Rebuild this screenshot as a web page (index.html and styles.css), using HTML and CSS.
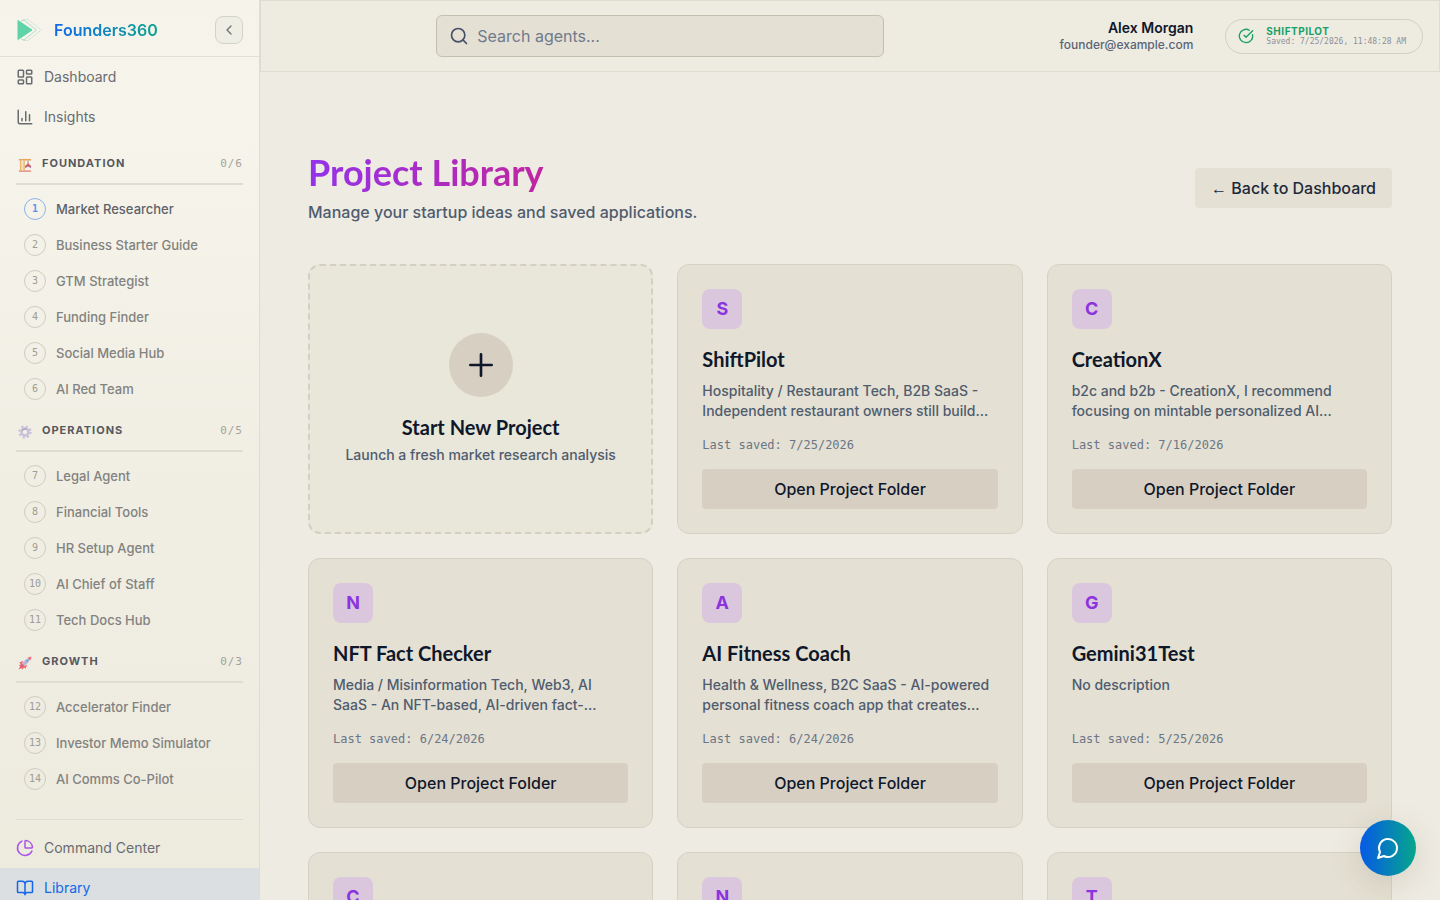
FILE: index.html
```html
<!DOCTYPE html>
<html lang="en">
<head>
<meta charset="utf-8">
<meta name="viewport" content="width=device-width, initial-scale=1">
<title>Founders360 – Project Library</title>
<link rel="stylesheet" href="styles.css">
</head>
<body>
<div class="shell">
  <aside class="sidebar">
    <div class="brand">
      <svg class="logo" viewBox="0 0 28 24" aria-hidden="true">
        <path d="M7 1.500H12L25.500 12 12 22.500H7" fill="none" stroke="#b4dcc8" stroke-width=".8" stroke-dasharray="2 1"/>
        <path d="M5 3 8 2 20.500 12 8 22 5 21" fill="none" stroke="#a4d6bf" stroke-width=".8"/>
        <path d="M2 2.500V21.500L16 12Z" fill="#5fd3a8" stroke="#5fd3a8" stroke-linejoin="round"/>
      </svg>
      <span class="brand-name">Founders360</span>
      <button class="collapse" type="button" aria-label="Collapse sidebar">
        <svg class="icon-sm" viewBox="0 0 24 24"><path d="m15 18-6-6 6-6"/></svg>
      </button>
    </div>
    <nav class="nav" aria-label="Main">
      <a class="nav-link" href="#"><svg class="icon" viewBox="0 0 24 24"><rect x="3" y="3" width="7" height="9" rx="1"/><rect x="14" y="3" width="7" height="5" rx="1"/><rect x="14" y="12" width="7" height="9" rx="1"/><rect x="3" y="16" width="7" height="5" rx="1"/></svg>Dashboard</a>
      <a class="nav-link" href="#"><svg class="icon" viewBox="0 0 24 24"><path d="M3 3v16a2 2 0 0 0 2 2h16M18 17V9M13 17V5M8 17v-3"/></svg>Insights</a>

      <section class="group group-first">
        <h2 class="group-head">
          <svg class="emoji" viewBox="0 0 16 16" aria-hidden="true"><path d="M1 15h14" stroke="#e58a76" stroke-width="1.600"/><path d="M3 3v11M7 3v11" fill="none" stroke="#e9b668" stroke-width="1.600"/><path d="M3 4l4 2.500-4 2.500 4 2.500-4 2.500" fill="none" stroke="#eec98a"/><path d="M1 2h14" stroke="#e8a35c" stroke-width="1.800"/><path d="M11.500 3v3" stroke="#8a8090"/><path d="M8.500 9 11.500 5.500l3 3.500z" fill="#d5606a"/><path d="M8 9.500h7M9 9v2.500M14 9v2.500" stroke="#a85b7b" stroke-width="1.200"/></svg>
          <span class="group-name">Foundation</span><span class="count">0/6</span>
        </h2>
        <ul class="steps">
          <li><a class="step step-current" href="#"><span class="num">1</span>Market Researcher</a></li>
          <li><a class="step" href="#"><span class="num">2</span>Business Starter Guide</a></li>
          <li><a class="step" href="#"><span class="num">3</span>GTM Strategist</a></li>
          <li><a class="step" href="#"><span class="num">4</span>Funding Finder</a></li>
          <li><a class="step" href="#"><span class="num">5</span>Social Media Hub</a></li>
          <li><a class="step" href="#"><span class="num">6</span>AI Red Team</a></li>
        </ul>
      </section>
      <section class="group">
        <h2 class="group-head">
          <svg class="emoji" viewBox="0 0 16 16" aria-hidden="true"><circle cx="8" cy="8" r="6.400" fill="none" stroke="#c9c1d8" stroke-width="2.400" stroke-dasharray="2.500 2.526"/><circle cx="8" cy="8" r="4" fill="none" stroke="#c9c1d8" stroke-width="3"/><path d="M5 6.500a3.500 3.500 0 0 1 5-1.500" fill="none" stroke="#988eae"/></svg>
          <span class="group-name">Operations</span><span class="count">0/5</span>
        </h2>
        <ul class="steps">
          <li><a class="step" href="#"><span class="num">7</span>Legal Agent</a></li>
          <li><a class="step" href="#"><span class="num">8</span>Financial Tools</a></li>
          <li><a class="step" href="#"><span class="num">9</span>HR Setup Agent</a></li>
          <li><a class="step" href="#"><span class="num">10</span>AI Chief of Staff</a></li>
          <li><a class="step" href="#"><span class="num">11</span>Tech Docs Hub</a></li>
        </ul>
      </section>
      <section class="group">
        <h2 class="group-head">
          <svg class="emoji" viewBox="0 0 16 16" aria-hidden="true"><path d="M4.500 10C6 6 9 3 14 2c-1 5-4 8-8 9.500z" fill="#b9b6d3"/><path d="M11 2 15.500.5 14 5z" fill="#ef6376"/><path d="M6 5.500 1.500 7.500 4 10zM10.500 10l-2 4.500L6 12z" fill="#ef6376"/><path d="m5 8.500-4 2 1.500 1.500L.5 15.500 4 14l1.500 1.500 2-4z" fill="#f0666e"/><path d="m3 12.500 2.500-2" stroke="#8c6bb0"/><circle cx="10.500" cy="5.500" r="1.400" fill="#79a9df"/></svg>
          <span class="group-name">Growth</span><span class="count">0/3</span>
        </h2>
        <ul class="steps">
          <li><a class="step" href="#"><span class="num">12</span>Accelerator Finder</a></li>
          <li><a class="step" href="#"><span class="num">13</span>Investor Memo Simulator</a></li>
          <li><a class="step" href="#"><span class="num">14</span>AI Comms Co-Pilot</a></li>
        </ul>
      </section>
      <hr class="divider">
      <a class="nav-link" href="#"><svg class="icon icon-purple" viewBox="0 0 24 24"><path d="M21 12c.552 0 1.005-.449.950-.998a10 10 0 0 0-8.953-8.951c-.550-.055-.998.398-.998.950v8a1 1 0 0 0 1 1zM21.210 15.890A10 10 0 1 1 8 2.830"/></svg>Command Center</a>
      <a class="nav-link nav-active" href="#" aria-current="page"><svg class="icon" viewBox="0 0 24 24"><path d="M12 7v14M3 18a1 1 0 0 1-1-1V4a1 1 0 0 1 1-1h5a4 4 0 0 1 4 4 4 4 0 0 1 4-4h5a1 1 0 0 1 1 1v13a1 1 0 0 1-1 1h-6a3 3 0 0 0-3 3 3 3 0 0 0-3-3z"/></svg>Library</a>
    </nav>
  </aside>

  <div class="page">
    <header class="topbar">
      <div class="search-area">
        <label class="search">
          <svg class="icon-md" viewBox="0 0 24 24" aria-hidden="true"><circle cx="11" cy="11" r="8"/><path d="m21 21-4.300-4.300"/></svg>
          <input class="search-input" type="search" placeholder="Search agents..." aria-label="Search agents">
        </label>
      </div>
      <div class="user">
        <span class="user-name">Alex Morgan</span>
        <span class="user-mail">founder@example.com</span>
      </div>
      <div class="status">
        <svg class="icon-sm" viewBox="0 0 24 24" aria-hidden="true"><path d="M21.801 10A10 10 0 1 1 17 3.335M9 11l3 3L22 4"/></svg>
        <div class="status-text">
          <span class="status-name">SHIFTPILOT</span>
          <span class="status-time">Saved: 7/25/2026, 11:48:28 AM</span>
        </div>
      </div>
    </header>

    <main class="content">
      <div class="page-head">
        <div>
          <h1 class="title">Project Library</h1>
          <p class="subtitle">Manage your startup ideas and saved applications.</p>
        </div>
        <button class="btn btn-back" type="button"><span class="arrow">←</span> Back to Dashboard</button>
      </div>

      <div class="grid">
        <button class="card card-new" type="button">
          <span class="plus"><svg class="icon-xl" viewBox="0 0 24 24" aria-hidden="true"><path d="M4 12h16M12 4v16"/></svg></span>
          <span class="card-title">Start New Project</span>
          <span class="new-desc">Launch a fresh market research analysis</span>
        </button>
        <article class="card">
          <div class="tile">S</div>
          <h3 class="card-title">ShiftPilot</h3>
          <p class="desc">Hospitality / Restaurant Tech, B2B SaaS -<br>Independent restaurant owners still build...</p>
          <p class="date">Last saved: 7/25/2026</p>
          <button class="btn btn-open" type="button">Open Project Folder</button>
        </article>
        <article class="card">
          <div class="tile">C</div>
          <h3 class="card-title">CreationX</h3>
          <p class="desc">b2c and b2b - CreationX, I recommend<br>focusing on mintable personalized AI...</p>
          <p class="date">Last saved: 7/16/2026</p>
          <button class="btn btn-open" type="button">Open Project Folder</button>
        </article>
        <article class="card">
          <div class="tile">N</div>
          <h3 class="card-title">NFT Fact Checker</h3>
          <p class="desc">Media / Misinformation Tech, Web3, AI<br>SaaS - An NFT-based, AI-driven fact-...</p>
          <p class="date">Last saved: 6/24/2026</p>
          <button class="btn btn-open" type="button">Open Project Folder</button>
        </article>
        <article class="card">
          <div class="tile">A</div>
          <h3 class="card-title">AI Fitness Coach</h3>
          <p class="desc">Health &amp; Wellness, B2C SaaS - AI-powered<br>personal fitness coach app that creates...</p>
          <p class="date">Last saved: 6/24/2026</p>
          <button class="btn btn-open" type="button">Open Project Folder</button>
        </article>
        <article class="card">
          <div class="tile">G</div>
          <h3 class="card-title">Gemini31Test</h3>
          <p class="desc">No description</p>
          <p class="date">Last saved: 5/25/2026</p>
          <button class="btn btn-open" type="button">Open Project Folder</button>
        </article>
        <article class="card"><div class="tile">C</div></article>
        <article class="card"><div class="tile">N</div></article>
        <article class="card"><div class="tile">T</div></article>
      </div>
    </main>
  </div>
</div>
<button class="chat" type="button" aria-label="Open chat">
  <svg class="icon-lg" viewBox="0 0 24 24"><path d="M7.900 20A9 9 0 1 0 4 16.100L2 22Z"/></svg>
</button>
</body>
</html>
```
FILE: styles.css
```css
* { box-sizing: border-box; }
body {
  margin: 0;
  background: #eeebe2;
  color: #0f172a;
  font-family: Inter, "Liberation Sans", sans-serif;
  font-size: 16px;
  line-height: 24px;
}
h1, h2, h3, p, ul { margin: 0; padding: 0; }
ul { list-style: none; }
a { color: inherit; text-decoration: none; }
button, input { font: inherit; color: inherit; }
svg { flex: none; fill: none; stroke: currentColor; stroke-width: 2; stroke-linecap: round; stroke-linejoin: round; }
.emoji, .logo { stroke: none; stroke-width: 1; stroke-linecap: butt; }
.icon-sm { width: 16px; height: 16px; }
.icon { width: 18px; height: 18px; }
.icon-md { width: 20px; height: 20px; }
.icon-lg { width: 24px; height: 24px; }
.icon-xl { width: 32px; height: 32px; }
.icon-purple { color: #a855e8; }

.shell { display: flex; height: 100vh; overflow: hidden; }

/* Sidebar */
.sidebar {
  flex: none;
  width: 260px;
  overflow: hidden;
  border-right: 1px solid #dfdcd2;
  background: linear-gradient(180deg, #f6f3eb 0%, #f6f4ea 18%, #f1efe4 50%, #edeade 100%);
}
.brand { display: flex; align-items: center; height: 57px; padding: 4px 16px 0; border-bottom: 1px solid #e2dfd6; }
.logo { width: 28px; height: 24px; }
.brand-name {
  margin-left: 10px;
  font-weight: 600;
  background: linear-gradient(90deg, #1268ec, #0aa38c);
  background-clip: text;
  -webkit-background-clip: text;
  color: transparent;
}
.collapse {
  display: grid;
  place-items: center;
  width: 28px;
  height: 28px;
  margin-left: auto;
  padding: 0;
  border: 1px solid #d2d3c9;
  border-radius: 8px;
  background: #eeeee5;
  color: #707176;
}
.nav-link { display: flex; align-items: center; gap: 10px; height: 40px; padding: 0 16px; font-size: 14px; color: #696b71; }
.nav-active { background: #dbdfe2; color: #1268e8; }
.group { padding: 13px 16px 0; }
.group-first { padding-top: 16px; }
.group-head { display: flex; align-items: center; gap: 10px; height: 32px; padding-bottom: 10px; border-bottom: 2px solid #dfdcd2; font-size: 11px; line-height: 16px; }
.emoji { width: 14px; height: 14px; margin: 4px 0 0 2px; }
.group-name { font-weight: 700; letter-spacing: 1px; text-transform: uppercase; color: #56585e; }
.count { margin: 2px 0 0 auto; font-family: "DejaVu Sans Mono", monospace; font-weight: 400; letter-spacing: 1px; color: #a3a29d; }
.steps { padding-top: 6px; }
.step { display: flex; align-items: center; gap: 10px; height: 36px; padding: 0 8px; font-size: 13px; font-weight: 500; color: #828280; }
.num {
  display: grid;
  place-items: center;
  width: 22px;
  height: 22px;
  border: 1px solid #cfcdc2;
  border-radius: 50%;
  font-family: "DejaVu Sans Mono", monospace;
  font-size: 10px;
  line-height: 18px;
  font-weight: 400;
  color: #9d9c97;
}
.step-current { color: #606269; }
.step-current .num { border-color: #8eb2ee; color: #5a94ee; font-weight: 700; }
.divider { margin: 22px 16px 8px; border: 0; border-top: 1px solid #dfdcd2; }

/* Top bar */
.page { flex: 1; min-width: 0; }
.topbar { display: flex; align-items: center; height: 72px; padding: 0 16px; border: 1px solid #dfdcd3; background: #eeebe1; }
.search-area { flex: 1; display: flex; justify-content: center; margin-right: 16px; }
.search { display: flex; align-items: center; gap: 8px; width: 100%; max-width: 448px; height: 42px; padding: 0 12px; border: 1px solid #c3bfae; border-radius: 6px; background: #e4e0d3; color: #475069; }
.search-input { flex: 1; min-width: 0; padding: 0; border: 0; outline: 0; background: transparent; }
.search-input::placeholder { color: #707a8d; opacity: 1; }
.user { display: flex; flex-direction: column; align-items: flex-end; margin-right: 32px; }
.user-name { font-size: 14px; line-height: 18px; font-weight: 600; }
.user-mail { font-size: 12px; line-height: 16px; font-weight: 500; color: #5a6576; }
.status { display: flex; align-items: center; gap: 12px; height: 35px; padding: 0 16px 0 12px; border: 1px solid #d3d0c0; border-radius: 18px; color: #16a067; }
.status-text { display: flex; flex-direction: column; }
.status-name { font-size: 10px; line-height: 12px; font-weight: 700; letter-spacing: 0.500px; }
.status-time { font-family: "DejaVu Sans Mono", monospace; font-size: 8px; line-height: 10px; color: #8a9099; }

/* Library */
.content { padding: 80px 48px 48px; }
.page-head { display: flex; align-items: center; justify-content: space-between; margin-bottom: 40px; }
.title {
  width: max-content;
  margin-bottom: 8px;
  font-size: 36px;
  line-height: 40px;
  font-family: Lato, sans-serif;
  font-weight: 700;
  background: linear-gradient(90deg, #9333ea, #c026a0);
  background-clip: text;
  -webkit-background-clip: text;
  color: transparent;
}
.subtitle { font-weight: 500; color: #4f5c6e; }
.btn { height: 40px; padding: 0 16px; border: 0; border-radius: 4px; font-weight: 500; }
.btn-back { background: #e4e0d3; color: #1e293b; }
.arrow { font-family: "Liberation Sans", sans-serif; font-weight: 400; }
.btn-open { width: 100%; background: #d7cfc2; }
.grid { display: grid; grid-template-columns: repeat(3, minmax(0, 1fr)); gap: 24px; }
.card { min-height: 270px; padding: 24px; border: 1px solid #d5d2c4; border-radius: 12px; background: #e4e0d3; }
.card-new { display: flex; flex-direction: column; align-items: center; justify-content: center; border: 2px dashed #d3d0c2; background: #e9e6da; }
.plus { display: grid; place-items: center; width: 64px; height: 64px; margin-bottom: 16px; border-radius: 50%; background: #d7cfc2; }
.card-title { margin-bottom: 8px; font-family: Lato, sans-serif; font-size: 20px; line-height: 28px; font-weight: 700; }
.card-new .card-title { margin-bottom: 4px; }
.new-desc, .desc { font-size: 14px; line-height: 20px; font-weight: 500; color: #4f5c6e; }
.tile { display: grid; place-items: center; width: 40px; height: 40px; margin-bottom: 16px; border-radius: 8px; background: #dbc7dd; color: #8b34dd; font-size: 18px; font-weight: 700; }
.desc { min-height: 40px; margin-bottom: 16px; }
.date { margin-bottom: 16px; font-family: "DejaVu Sans Mono", monospace; font-size: 12px; line-height: 16px; color: #6b7686; }

.chat {
  position: fixed;
  right: 24px;
  bottom: 24px;
  display: grid;
  place-items: center;
  width: 56px;
  height: 56px;
  padding: 0;
  border: 0;
  border-radius: 50%;
  background: linear-gradient(90deg, #0659e6, #06a78c);
  color: #fff;
  box-shadow: 0 8px 32px rgba(80, 70, 40, 0.15);
}
```
